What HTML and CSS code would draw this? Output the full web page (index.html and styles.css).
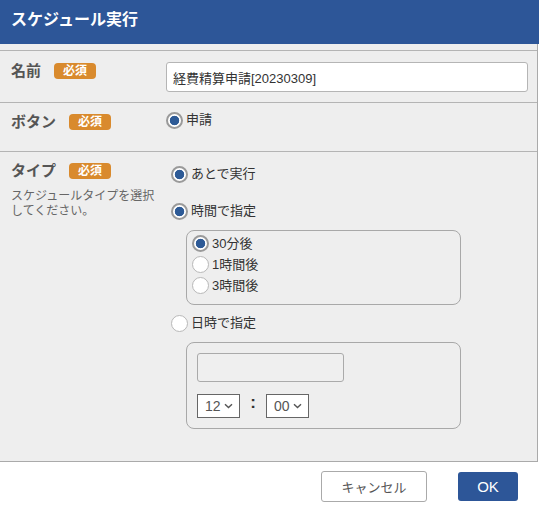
FILE: index.html
```html
<!DOCTYPE html>
<html lang="ja">
<head>
<meta charset="utf-8">
<title>スケジュール実行</title>
<link rel="stylesheet" href="styles.css">
</head>
<body>
<div class="dialog">
  <header class="header"><h1 class="title">スケジュール実行</h1></header>
  <div class="panel">
    <div class="row row-name">
      <div class="lab"><span class="lab-text">名前</span><span class="badge">必須</span></div>
      <div class="field"><input class="text-input" type="text" value="経費精算申請[20230309]"></div>
    </div>
    <div class="row row-button">
      <div class="lab"><span class="lab-text">ボタン</span><span class="badge">必須</span></div>
      <div class="field field-button">
        <label class="opt"><input type="radio" class="radio" name="btn" checked><span>申請</span></label>
      </div>
    </div>
    <div class="row row-type">
      <div class="lab-col">
        <div class="lab"><span class="lab-text">タイプ</span><span class="badge">必須</span></div>
        <p class="desc">スケジュールタイプを選択<br>してください。</p>
      </div>
      <div class="field field-type">
        <label class="opt"><input type="radio" class="radio" name="type" checked><span>あとで実行</span></label>
        <label class="opt opt-2"><input type="radio" class="radio" name="type2" checked><span>時間で指定</span></label>
        <div class="box box-time">
          <label class="opt opt-sub"><input type="radio" class="radio" name="after" checked><span>30分後</span></label>
          <label class="opt opt-sub"><input type="radio" class="radio" name="after"><span>1時間後</span></label>
          <label class="opt opt-sub"><input type="radio" class="radio" name="after"><span>3時間後</span></label>
        </div>
        <label class="opt opt-3"><input type="radio" class="radio" name="type3"><span>日時で指定</span></label>
        <div class="box box-date">
          <input class="date-input" type="text" value="">
          <div class="time-row">
            <span class="sel"><span class="sel-val">12</span><svg class="chev" width="9" height="6" viewBox="0 0 9 6"><path d="M1 1.2 L4.5 4.6 L8 1.2" fill="none" stroke="#555" stroke-width="1.4"/></svg></span>
            <span class="colon">:</span>
            <span class="sel"><span class="sel-val">00</span><svg class="chev" width="9" height="6" viewBox="0 0 9 6"><path d="M1 1.2 L4.5 4.6 L8 1.2" fill="none" stroke="#555" stroke-width="1.4"/></svg></span>
          </div>
        </div>
      </div>
    </div>
  </div>
  <footer class="footer">
    <button class="btn btn-cancel" type="button">キャンセル</button>
    <button class="btn btn-ok" type="button">OK</button>
  </footer>
</div>
</body>
</html>
```
FILE: styles.css
```css
* { box-sizing: border-box; }
html, body { margin: 0; padding: 0; background: #fff; }
body {
  font-family: "Liberation Sans", "Noto Sans CJK JP", sans-serif;
  color: #333;
  width: 539px;
}
.header {
  height: 44px;
  background: #2d5698;
  display: flex;
  align-items: center;
  padding-left: 11px;
}
.title {
  margin: 0;
  font-size: 16px;
  font-weight: bold;
  color: #fff;
  line-height: 20px;
  margin-top: -4px;
}
.panel {
  width: 538px;
  background: #eeeeee;
  border-right: 1px solid #aaa;
  border-bottom: 1px solid #aaa;
  padding-top: 6px;
}
.row {
  display: grid;
  grid-template-columns: 155px 1fr;
  border-top: 1px solid #b4b4b4;
  padding-left: 11px;
}
.row-name { padding-top: 11px; padding-bottom: 10px; padding-right: 9px; }
.row-button { padding-top: 10px; padding-bottom: 20px; }
.row-type { padding-top: 10px; padding-bottom: 32px; }
.lab {
  display: flex;
  align-items: center;
  height: 18px;
  gap: 13px;
}
.lab-text {
  font-size: 15px;
  font-weight: bold;
  color: #555;
  line-height: 18px;
}
.badge {
  display: inline-flex;
  align-items: center;
  justify-content: center;
  width: 42px;
  height: 16px;
  border-radius: 4px;
  background: #d98a2d;
  color: #fff;
  font-size: 12px;
  font-weight: bold;
  line-height: 16px;
}
.desc {
  margin: 9px 0 0;
  font-size: 12px;
  line-height: 15px;
  color: #666;
}
.text-input {
  display: block;
  width: 362px;
  height: 30px;
  border: 1px solid #b5b5b5;
  border-radius: 3px;
  background: #fff;
  padding: 0 6px;
  font-family: "Liberation Sans", "Noto Sans CJK JP", sans-serif;
  font-size: 13px;
  color: #333;
}
.field-button { margin-top: -2px; }
.field-type { padding-left: 5px; margin-top: 3px; display: flex; flex-direction: column; align-items: flex-start; }
.opt {
  display: flex;
  align-items: center;
  height: 18px;
  font-size: 13px;
  color: #333;
  line-height: 18px;
}
.opt span { margin-left: 3px; }
.opt-2 { margin-top: 19px; }
.opt-3 { margin-top: 9px; }
.opt-sub { height: 21px; }
.radio {
  -webkit-appearance: none;
  appearance: none;
  margin: 0;
  width: 17px;
  height: 17px;
  border-radius: 50%;
  border: 1.5px solid #b8b8b8;
  background: #fff;
  flex: none;
}
.radio:checked {
  border: 2px solid #9a9a9a;
  background: radial-gradient(circle, #2d5a96 0 4.4px, #fff 5.1px);
}
.box {
  margin-left: 15px;
  width: 275px;
  border: 1px solid #a8a8a8;
  border-radius: 8px;
}
.box-time {
  margin-top: 10px;
  padding: 2px 0 8px 5px;
}
.box-date {
  margin-top: 10px;
  padding: 10px 10px 10px 10px;
}
.date-input {
  display: block;
  width: 147px;
  height: 29px;
  border: 1px solid #aaa;
  border-radius: 3px;
  background: #efefef;
}
.time-row {
  display: flex;
  align-items: center;
  margin-top: 12px;
}
.sel {
  display: flex;
  align-items: center;
  width: 43px;
  height: 24px;
  border: 1px solid #666;
  background: #fff;
  padding-left: 7px;
  font-size: 14px;
  color: #555;
}
.sel-val { width: 19px; }
.colon {
  width: 26px;
  text-align: center;
  font-size: 17px;
  font-weight: bold;
  color: #333;
  line-height: 18px;
  margin-top: -6px;
}
.footer {
  display: flex;
  justify-content: flex-end;
  align-items: center;
  height: 47px;
  padding-right: 21px;
  padding-top: 2px;
  gap: 31px;
}
.btn {
  font-family: "Liberation Sans", "Noto Sans CJK JP", sans-serif;
  border-radius: 3px;
  padding: 0;
  margin: 0;
}
.btn-cancel {
  width: 106px;
  height: 31px;
  background: #fff;
  border: 1px solid #aaa;
  color: #555;
  font-size: 13px;
}
.btn-ok {
  width: 60px;
  height: 29px;
  background: #2d5698;
  border: none;
  color: #fff;
  font-size: 15px;
}
```
